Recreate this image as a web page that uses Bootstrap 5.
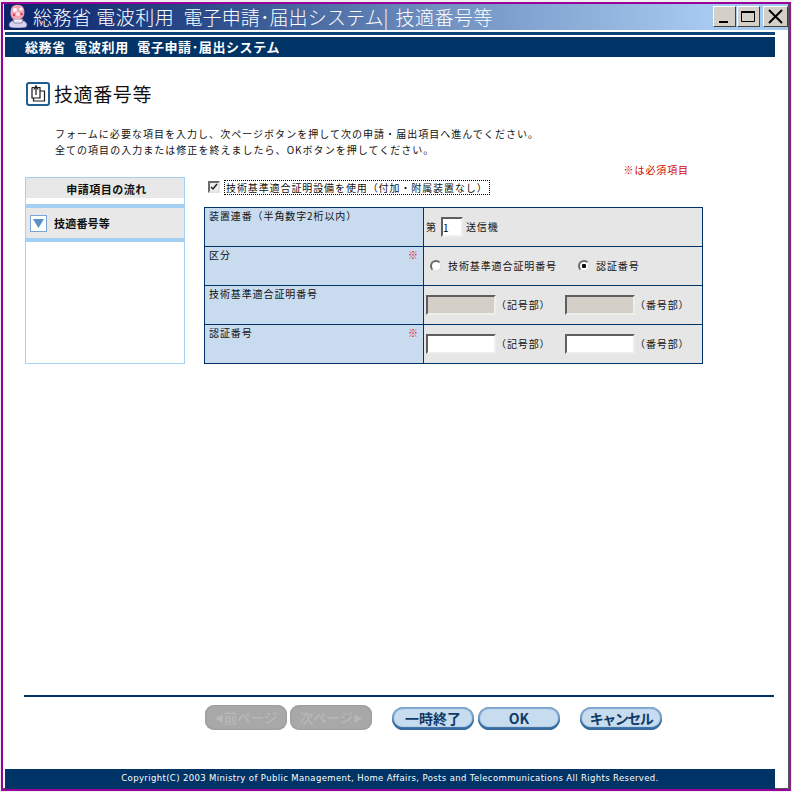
<!DOCTYPE html>
<html lang="ja">
<head>
<meta charset="utf-8">
<title>技適番号等</title>
<link rel="stylesheet" href="https://cdn.jsdelivr.net/npm/bootstrap@5.3.0/dist/css/bootstrap.min.css">
<style>
html,body{height:792px;overflow:hidden;background:#efefef;}
body{margin:0;font-family:"Noto Sans CJK JP","Liberation Sans",sans-serif;font-size:10px;line-height:16px;letter-spacing:.9px;color:#111;}
.frame{margin:2px 1px 0 1px;height:789px;border:2px solid #990099;border-right-color:#8a1f8a;background:#fff;box-shadow:inset -1px -1px 0 #555;}
.tbar{height:26px;margin:0 1px;padding:0 0 0 3px;background:linear-gradient(90deg,#0a246a 0%,#2a4a8a 25%,#6f90c0 55%,#a6caf0 90%);color:#fff;font-size:19px;line-height:26px;letter-spacing:.5px;}
.tbar svg{flex:none;}
.tname{margin-left:4px;white-space:pre;font-weight:300;}
.tname-sys{margin-left:5px;letter-spacing:.1px;}
.tname-sep{margin:0 7px 0 0;letter-spacing:0;}
.wbtns{margin-left:auto;gap:1px;padding-top:2px;}
.wbtn{width:23px;height:21px;background:#d4d0c8;border:1px solid;border-color:#fff #404040 #404040 #fff;padding:0;}
.wbtn svg{display:block;margin:auto;}
.wbtn-x{width:25px;margin-left:2px;}
.rule1{height:3px;width:770px;margin:2px 0 0 2px;background:#0b4278;}
.hbar{height:20px;width:770px;margin:2px 0 0 2px;padding-left:20px;background:#003366;color:#fff;font-weight:700;font-size:13px;line-height:20px;letter-spacing:.6px;word-spacing:5px;white-space:pre;}
.ptitle{margin:25px 0 0 23px;height:24px;font-size:19px;line-height:24px;letter-spacing:.6px;color:#111;}
.ptitle svg{margin-right:4px;flex:none;}
.desc{margin:20px 0 0 52px;letter-spacing:1.03px;}
.reqline{height:19px;width:686px;padding-top:4px;color:#d00000;text-align:right;line-height:16px;}
.work{margin-left:22px;}
.flow{width:160px;height:187px;border:1px solid #a6d0f0;background:#fff;}
.flow-h{height:20px;background:#e8e8e8;text-align:center;font-weight:700;font-size:11px;line-height:23px;letter-spacing:.5px;padding-left:3px;}
.flow-i{height:38px;margin-top:6px;border-top:4px solid #a4cff2;border-bottom:4px solid #a4cff2;background:#e8e8e8;padding-left:4px;font-weight:700;font-size:11px;letter-spacing:.2px;gap:7px;}
.flow-i svg{flex:none;}
.formcol{margin-left:19px;width:499px;}
.chk{height:30px;padding:3px 0 0 4px;gap:4px;}
.lbl-dot{border:1px dotted #000;height:15px;line-height:13px;padding:0 1px;white-space:nowrap;}
.chkbox,.radiob{appearance:none;margin:0;flex:none;border:2px solid;border-color:#6a6a6a #e2e2e2 #e2e2e2 #6a6a6a;background:#f3f3f3 no-repeat center;}
.chkbox{width:12px;height:12px;background-color:#eee;background-image:url("data:image/svg+xml,%3Csvg xmlns='http://www.w3.org/2000/svg' viewBox='0 0 8 8'%3E%3Cpath d='M1 4l2 2 4-5' fill='none' stroke='%23222' stroke-width='1.5'/%3E%3C/svg%3E");margin-top:1px;}
.radiob{width:12px;height:12px;border-radius:50%;background:#fff;}
.radiob:checked{background-image:radial-gradient(circle,#111 0,#111 2px,#fff 2.5px);}
.ftab{width:499px;border-collapse:collapse;margin:0;table-layout:fixed;}
.ftab td{height:39px;border:1px solid #003366;padding:0;vertical-align:middle;}
.ftab td.lc{width:219px;background:#c9dbee;vertical-align:top;padding:0 6px 0 4px;}
.ftab td.rc{background:#e6e6e6;padding-left:2px;}
.star{color:#e0102a;letter-spacing:0;font-size:10px;margin-right:-1px;}
.lc-in{padding-top:0;line-height:15px;}
.fin{width:70px;height:20px;margin:0;padding:0 1px 0 0;border:2px solid;border-color:#5f5f5f #eeeeea #eeeeea #5f5f5f;background:#fff;font-size:10px;line-height:14px;border-radius:0;outline:0;flex:none;}
.fin:disabled{background:#d4d0c8;}
.fin-s{width:22px;margin:0 3px 0 4px;}
.r1{margin-left:4px;}
.rt1{margin:0 21px 0 6px;}
.rt2{margin-left:6px;}
.unit1{width:69px;}
.botwrap{margin-top:auto;}
.botrule{height:2px;width:750px;margin-left:21px;background:#003366;}
.btnrow{height:25px;margin:8px 0 39px 202px;}
.gbtn{flex:none;height:23px;margin-top:2px;padding:0;border-radius:12px;border:0;font-weight:700;font-size:14px;line-height:21px;letter-spacing:0;color:#103a66;background:#c8dcf0;box-shadow:inset 0 2px 1px #7fa6cc,inset 0 -3px 1px #366b9e,inset 2px 0 1px #6e9ac4,inset -2px 0 1px #6e9ac4;}
.gbtn:disabled{height:25px;margin-top:0;width:82px;border-radius:9px;opacity:1;color:#b8b8b8;background:#a8a8a8;font-weight:500;font-size:13.5px;box-shadow:inset 0 0 2px #868686;}
.tri{font-size:9px;vertical-align:1px;}
.w82{width:82px;}
.ml3{margin-left:3px;}
.ml20{margin-left:20px;}
.ml4{margin-left:4px;}
.gbtn.narrow{letter-spacing:-1.5px;}
.fbar{height:20px;width:770px;margin-left:2px;background:#003366;color:#fff;font-family:"DejaVu Sans","Noto Sans CJK JP",sans-serif;font-size:8.5px;line-height:19px;text-align:center;letter-spacing:.37px;white-space:nowrap;}
</style>
</head>
<body>
<div class="frame d-flex flex-column">
  <div class="tbar d-flex align-items-start">
    <svg width="22" height="24" viewBox="0 0 22 24"><path d="M2 21c0-3 3-5 9-5s9 2 9 5-4 3-9 3-9 0-9-3z" fill="#d8d2f2" stroke="#5a5a7a" stroke-width=".7"/><path d="M6 15h10l-1 4H7z" fill="#f0ecfa" stroke="#6a6a8a" stroke-width=".7"/><path d="M5 3c2-3 9-3 11 0s2 9-1 11-8 2-10 0-2-8 0-11z" fill="#f2a6b4"/><circle cx="8" cy="6" r="2" fill="#fff"/><circle cx="14" cy="5" r="1.600" fill="#fff"/><circle cx="11" cy="10" r="2" fill="#fbe0e6"/><circle cx="14.500" cy="10" r="1.300" fill="#d84060"/><circle cx="7" cy="11" r="1.200" fill="#d84060"/></svg>
    <span class="tname">総務省 電波利用<span class="tname-sys"> 電子申請･届出システム</span><span class="tname-sep">|</span>技適番号等</span>
    <div class="wbtns d-flex">
      <button class="wbtn" type="button" aria-label="最小化"><svg width="21" height="19" viewBox="0 0 21 19"><rect x="5" y="14" width="9" height="2" fill="#000"/></svg></button>
      <button class="wbtn" type="button" aria-label="最大化"><svg width="21" height="19" viewBox="0 0 21 19"><path d="M3.500 4.500h13v10h-13z" fill="none" stroke="#000"/><path d="M3 4h14v2H3z" fill="#000"/></svg></button>
      <button class="wbtn wbtn-x" type="button" aria-label="閉じる"><svg width="23" height="19" viewBox="0 0 23 19"><path d="M5 3l13 13M18 3L5 16" stroke="#000" stroke-width="2"/></svg></button>
    </div>
  </div>
  <div class="rule1"></div>
  <div class="hbar">総務省 電波利用 電子申請･届出システム</div>

  <div class="ptitle d-flex align-items-center">
    <svg width="24" height="24" viewBox="0 0 24 24"><rect x="1" y="1" width="22" height="22" rx="2" fill="#fff" stroke="#1f5f8f" stroke-width="2"/><path d="M6 5.500h2.500M11.500 5.500h2.500V9h4.500v10h-11v-3M6 5.500v10.500h8V9" fill="none" stroke="#1a1a1a" stroke-width="1.200"/><path d="M10 13V4.500M7.800 7.500L10 4 12.200 7.500" fill="none" stroke="#1a1a1a" stroke-width="1.200"/></svg>
    <span>技適番号等</span>
  </div>
  <div class="desc">フォームに必要な項目を入力し、次ページボタンを押して次の申請・届出項目へ進んでください。<br>全ての項目の入力または修正を終えましたら、OKボタンを押してください。</div>
  <div class="reqline">※は必須項目</div>

  <div class="work d-flex">
    <div class="flow">
      <div class="flow-h">申請項目の流れ</div>
      <div class="flow-i d-flex align-items-center">
        <svg width="17" height="17" viewBox="0 0 17 17"><rect x=".5" y=".5" width="16" height="16" fill="#fff" stroke="#78a6d8"/><path d="M3 4h11l-5.500 9z" fill="#5b8fc8"/></svg>
        <span>技適番号等</span>
      </div>
    </div>
    <div class="formcol">
      <div class="chk d-flex align-items-start">
        <input class="chkbox" type="checkbox" checked aria-label="技術基準適合証明設備を使用">
        <span class="lbl-dot">技術基準適合証明設備を使用（付加・附属装置なし）</span>
      </div>
      <table class="ftab">
        <tr>
          <td class="lc"><div class="lc-in">装置連番（半角数字2桁以内）</div></td>
          <td class="rc"><div class="d-flex align-items-center">第<input class="fin fin-s" type="text" value="1" aria-label="連番">送信機</div></td>
        </tr>
        <tr>
          <td class="lc"><div class="lc-in d-flex justify-content-between"><span>区分</span><span class="star">※</span></div></td>
          <td class="rc"><div class="d-flex align-items-center">
            <input class="radiob r1" type="radio" name="kb" aria-label="技術基準適合証明番号">
            <span class="rt1">技術基準適合証明番号</span>
            <input class="radiob" type="radio" name="kb" checked aria-label="認証番号">
            <span class="rt2">認証番号</span>
          </div></td>
        </tr>
        <tr>
          <td class="lc"><div class="lc-in">技術基準適合証明番号</div></td>
          <td class="rc"><div class="d-flex align-items-center">
            <input class="fin" type="text" disabled aria-label="記号部"><span class="unit1">（記号部）</span>
            <input class="fin" type="text" disabled aria-label="番号部"><span>（番号部）</span>
          </div></td>
        </tr>
        <tr>
          <td class="lc"><div class="lc-in d-flex justify-content-between"><span>認証番号</span><span class="star">※</span></div></td>
          <td class="rc"><div class="d-flex align-items-center">
            <input class="fin" type="text" aria-label="記号部"><span class="unit1">（記号部）</span>
            <input class="fin" type="text" aria-label="番号部"><span>（番号部）</span>
          </div></td>
        </tr>
      </table>
    </div>
  </div>

  <div class="botwrap">
    <div class="botrule"></div>
    <div class="btnrow d-flex">
      <button class="btn gbtn" type="button" disabled><span class="tri">◀</span>前ページ</button>
      <button class="btn gbtn ml3" type="button" disabled>次ページ<span class="tri">▶</span></button>
      <button class="btn gbtn w82 ml20" type="button">一時終了</button>
      <button class="btn gbtn w82 ml4" type="button">OK</button>
      <button class="btn gbtn narrow w82 ml20" type="button">キャンセル</button>
    </div>
    <div class="fbar">Copyright(C) 2003 Ministry of Public Management, Home Affairs, Posts and Telecommunications All Rights Reserved.</div>
  </div>
</div>
<script src="https://cdn.jsdelivr.net/npm/bootstrap@5.3.0/dist/js/bootstrap.bundle.min.js"></script>
</body>
</html>
